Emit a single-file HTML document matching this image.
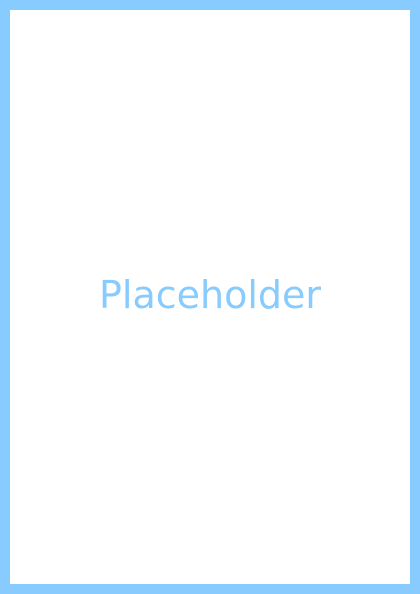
<!DOCTYPE html>
<html><head><style>
html,body{margin:0;padding:0;}
body{width:420px;height:594px;box-sizing:border-box;border:10px solid #87cbff;background:#fff;position:relative;overflow:hidden;}
.t{position:absolute;left:0;right:0;top:261px;text-align:center;font-family:"DejaVu Sans","Liberation Sans",sans-serif;font-size:38px;line-height:48px;color:#87cbff;}
</style></head><body><div class="t">Placeholder</div></body></html>
